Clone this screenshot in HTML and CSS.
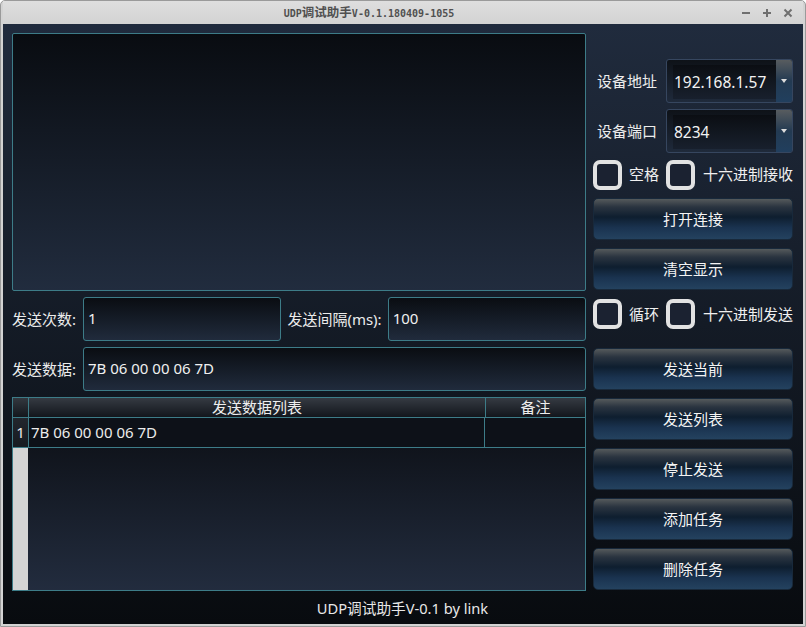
FILE: index.html
```html
<!DOCTYPE html>
<html>
<head>
<meta charset="utf-8">
<link rel="stylesheet" href="styles.css">
</head>
<body>
<div class="window">
  <div class="titlebar">
    <div class="title"><span>UDP</span><span class="title-cjk">调试助手</span><span>V-0.1.180409-1055</span></div>
    <div class="controls">
      <span class="ctl"><svg width="10" height="10" viewBox="0 0 10 10"><path d="M1 5H9" stroke="#6f6f6f" stroke-width="2"/></svg></span>
      <span class="ctl"><svg width="10" height="10" viewBox="0 0 10 10"><path d="M1 5H9M5 1V9" stroke="#6f6f6f" stroke-width="2"/></svg></span>
      <span class="ctl"><svg width="10" height="10" viewBox="0 0 10 10"><path d="M1.5 1.5L8.5 8.5M8.5 1.5L1.5 8.5" stroke="#6f6f6f" stroke-width="2"/></svg></span>
    </div>
  </div>
  <div class="content">
    <div class="main">
      <div class="left">
        <div class="display"></div>
        <div class="row">
          <span class="label">发送次数:</span>
          <div class="input">1</div>
          <span class="label">发送间隔(ms):</span>
          <div class="input">100</div>
        </div>
        <div class="row">
          <span class="label">发送数据:</span>
          <div class="input">7B 06 00 00 06 7D</div>
        </div>
        <div class="table">
          <div class="thead">
            <div class="corner"></div>
            <div class="th c1">发送数据列表</div>
            <div class="th c2">备注</div>
          </div>
          <div class="tr">
            <div class="rh">1</div>
            <div class="td c1">7B 06 00 00 06 7D</div>
            <div class="td c2"></div>
          </div>
          <div class="trest">
            <div class="rh-empty"></div>
            <div class="empty"></div>
          </div>
        </div>
      </div>
      <div class="right">
        <div class="spacer-top"></div>
        <div class="combo-row">
          <span class="combo-label">设备地址</span>
          <div class="combo">
            <div class="combo-text">192.168.1.57</div>
            <div class="combo-btn"><span class="arrow"></span></div>
          </div>
        </div>
        <div class="combo-row second">
          <span class="combo-label">设备端口</span>
          <div class="combo">
            <div class="combo-text">8234</div>
            <div class="combo-btn"><span class="arrow"></span></div>
          </div>
        </div>
        <div class="check-row">
          <span class="cb"></span><span class="cb-label">空格</span>
          <span class="cb"></span><span class="cb-label last">十六进制接收</span>
        </div>
        <div class="btn">打开连接</div>
        <div class="btn">清空显示</div>
        <div class="check-row tall">
          <span class="cb"></span><span class="cb-label">循环</span>
          <span class="cb"></span><span class="cb-label last">十六进制发送</span>
        </div>
        <div class="btn">发送当前</div>
        <div class="btn">发送列表</div>
        <div class="btn">停止发送</div>
        <div class="btn">添加任务</div>
        <div class="btn final">删除任务</div>
      </div>
    </div>
    <div class="footer">UDP调试助手V-0.1 by link</div>
  </div>
</div>
</body>
</html>
```
FILE: styles.css
```css
html, body {
  margin: 0;
  padding: 0;
}
body {
  width: 806px;
  height: 627px;
  overflow: hidden;
  background: #ffffff;
  font-family: "Noto Sans", "Noto Sans CJK SC", sans-serif;
  font-size: 15px;
  color: #ececec;
}
.window {
  box-sizing: border-box;
  width: 806px;
  height: 627px;
  background: #d3d3d3;
  border: 1px solid #9a9a9a;
  border-radius: 5px 5px 0 0;
  display: flex;
  flex-direction: column;
  padding: 0 2px 2px 2px;
}
.titlebar {
  height: 23px;
  display: flex;
  align-items: center;
  padding-right: 5px;
  background: linear-gradient(#dedede, #d3d3d3);
}
.title {
  flex: 1;
  text-align: center;
  font-family: "DejaVu Sans Mono", "Noto Sans CJK SC", monospace;
  font-weight: bold;
  font-size: 10px;
  color: #505050;
  line-height: 23px;
}
.title-cjk {
  font-family: "Noto Sans CJK SC", sans-serif;
  font-size: 12.5px;
}
.controls {
  display: flex;
}
.ctl {
  width: 21px;
  height: 23px;
  display: flex;
  align-items: center;
  justify-content: center;
}
.content {
  flex: 1;
  min-height: 0;
  background: linear-gradient(#202b3d, #080b0f);
  padding: 9px 10px 0 9px;
  display: flex;
  flex-direction: column;
}
.main {
  display: flex;
  gap: 7px;
}
.left {
  width: 574px;
  display: flex;
  flex-direction: column;
  gap: 6px;
}
.display {
  height: 258px;
  box-sizing: border-box;
  border: 1px solid #3d7c88;
  border-radius: 2px;
  background: linear-gradient(#090c11, #212c3e);
}
.row {
  display: flex;
  align-items: center;
  gap: 6px;
  height: 44px;
}
.label {
  white-space: nowrap;
  line-height: 20px;
  margin-top: -1px;
}
.input {
  flex: 1;
  box-sizing: border-box;
  height: 44px;
  border: 1px solid #3d7c88;
  border-radius: 3px;
  background: linear-gradient(#0a0d12, #202b3c);
  display: flex;
  align-items: center;
  padding-left: 4px;
  padding-bottom: 2px;
  color: #f0f0f0;
}
.row .label:first-child {
  min-width: 65px;
}
.table {
  height: 194px;
  box-sizing: border-box;
  border: 1px solid #3d7c88;
  display: flex;
  flex-direction: column;
}
.thead, .tr {
  display: flex;
  border-bottom: 1px solid #3d7c88;
}
.thead {
  height: 19px;
}
.tr {
  height: 29px;
}
.corner, .rh {
  width: 15px;
  border-right: 1px solid #3d7c88;
  background: linear-gradient(#33383f, #13171d);
}
.th {
  background: linear-gradient(#353a42, #12161c);
  text-align: center;
  line-height: 18px;
  color: #eeeeee;
}
.c1 {
  width: 456px;
  border-right: 1px solid #3d7c88;
}
.c2 {
  flex: 1;
}
.rh {
  text-align: center;
  line-height: 28px;
  background: linear-gradient(#22262d, #171b21);
}
.td {
  background: #0d1118;
  line-height: 28px;
  padding-left: 2px;
  box-sizing: border-box;
}
.trest {
  flex: 1;
  display: flex;
}
.rh-empty {
  width: 15px;
  background: #d4d4d4;
}
.empty {
  flex: 1;
  background: linear-gradient(#10141c, #222c3e);
}
.footer {
  flex: 1;
  display: flex;
  align-items: center;
  justify-content: center;
  font-size: 14.67px;
  color: #e8e8e8;
  padding-bottom: 1px;
}
.right {
  width: 200px;
  display: flex;
  flex-direction: column;
}
.spacer-top {
  height: 26px;
}
.combo-row {
  display: flex;
  align-items: center;
  height: 44px;
}
.combo-row.second {
  margin-top: 6px;
}
.combo-label {
  width: 73px;
  padding-left: 4px;
  box-sizing: border-box;
  white-space: nowrap;
  margin-top: -2px;
}
.combo {
  width: 127px;
  height: 44px;
  box-sizing: border-box;
  border: 1px solid #36465f;
  border-radius: 3px;
  background: linear-gradient(#0e1218, #1f2a3b);
  display: flex;
  align-items: stretch;
}
.combo-text {
  flex: 1;
  display: flex;
  align-items: center;
  margin: 5px 0 3px 6px;
  padding-left: 1px;
  padding-bottom: 1px;
  background: linear-gradient(#0b0e13, #18202d);
  font-size: 15.5px;
  color: #f2f2f2;
}
.combo-btn {
  width: 16px;
  border-radius: 0 2px 2px 0;
  background: linear-gradient(#585c5f, #233a52 50%, #213f5e);
  display: flex;
  align-items: center;
  justify-content: center;
}
.arrow {
  width: 0;
  height: 0;
  border-left: 3.5px solid transparent;
  border-right: 3.5px solid transparent;
  border-top: 4px solid #dcdcdc;
}
.check-row {
  display: flex;
  align-items: center;
  height: 45px;
  margin-top: -1px;
  margin-bottom: 1px;
}
.check-row.tall {
  height: 50px;
  margin-top: -9px;
  margin-bottom: 9px;
}
.cb {
  width: 30px;
  height: 30px;
  box-sizing: border-box;
  border: 4px solid #e2e2e2;
  border-radius: 7px;
  background: #1b2231;
}
.cb-label {
  margin-left: 7px;
  margin-right: 7px;
  white-space: nowrap;
  color: #f0f0f0;
  margin-top: -2px;
}
.cb-label.last {
  margin-left: 8px;
  margin-right: 0;
}
.btn {
  box-sizing: border-box;
  width: 200px;
  height: 42px;
  margin-bottom: 8px;
  border: 1px solid #18293b;
  border-radius: 5px;
  background: linear-gradient(#555a5c 0%, #2a3440 20%, #0e1e2f 45%, #1a3350 72%, #24425f 100%);
  display: flex;
  align-items: center;
  justify-content: center;
  padding-bottom: 2px;
  color: #f4f4f4;
}
.btn.final {
  margin-bottom: 0;
}
```
